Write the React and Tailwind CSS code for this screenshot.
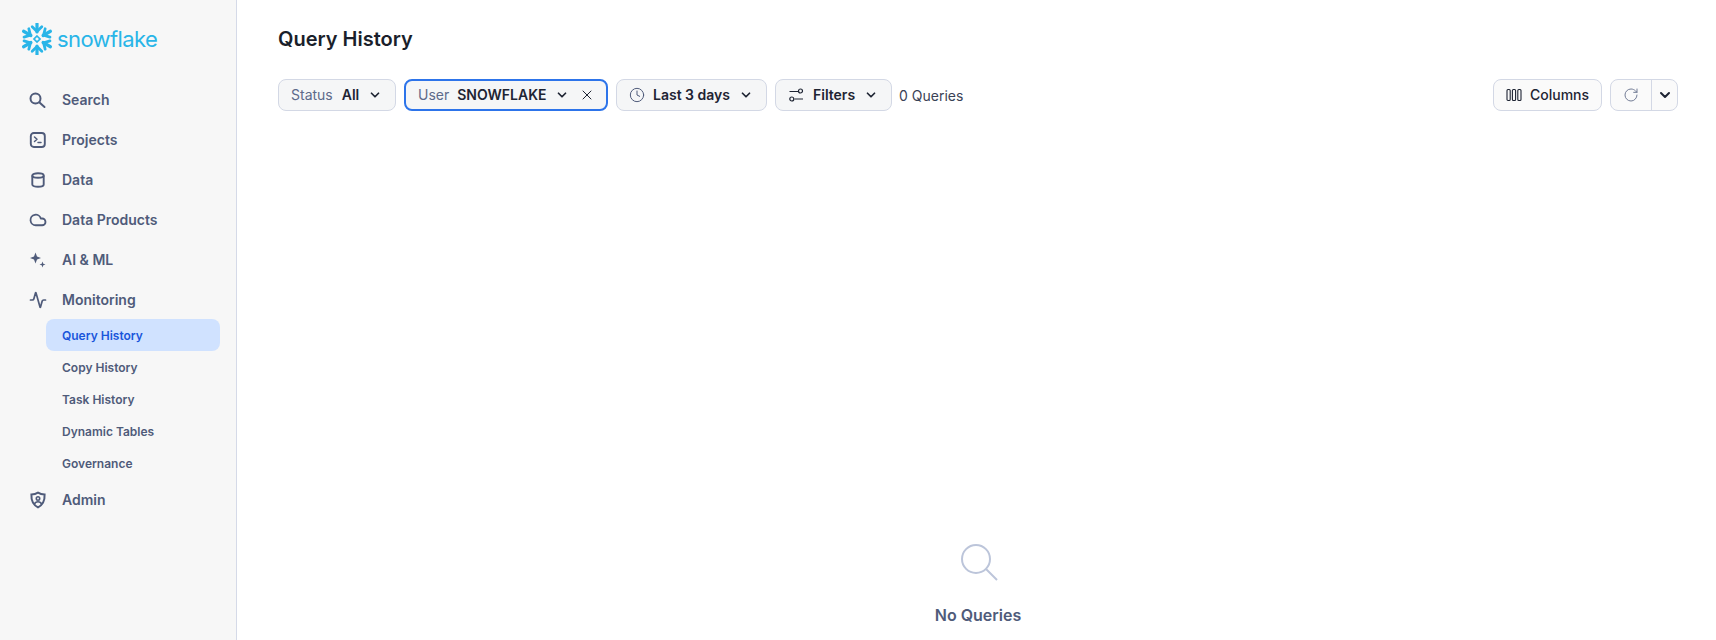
import { Cloud, Activity, ChevronDown, X, Clock, RotateCw } from "lucide-react";

const font = { fontFamily: "Inter, sans-serif" };

function SearchIcon() {
  return (
    <svg width="18" height="18" viewBox="0 0 18 18" fill="none" stroke="currentColor" strokeWidth="2" strokeLinecap="round">
      <circle cx="6.500" cy="7.500" r="5" />
      <path d="M10.500 11.500 15.500 16" />
    </svg>
  );
}

function ProjectsIcon() {
  return (
    <svg width="18" height="18" viewBox="0 0 18 18" fill="none" stroke="currentColor" strokeWidth="1.900" strokeLinecap="round" strokeLinejoin="round">
      <rect x="1.800" y="2" width="14" height="14" rx="3" />
      <path d="M5.500 6 8 8.300 5.500 10.500" strokeWidth="1.500" />
      <path d="M9 11.500h3" strokeWidth="1.500" />
    </svg>
  );
}

function DataIcon() {
  return (
    <svg width="18" height="18" viewBox="0 0 18 18" fill="none" stroke="currentColor" strokeWidth="1.900">
      <path d="M3.300 4.500c0-1.300 2.500-2.300 5.700-2.300s5.700 1 5.700 2.300v9c0 1.300-2.500 2.300-5.700 2.300s-5.700-1-5.700-2.300z" />
      <path d="M3.300 4.500c0 1.300 2.500 2.300 5.700 2.300s5.700-1 5.700-2.300" />
    </svg>
  );
}

function Sparkles() {
  return (
    <svg width="18" height="18" viewBox="0 0 18 18" fill="currentColor">
      <path d="M6.500 1.500 8 5.500l4 1.500-4 1.500-1.500 4-1.500-4-4-1.500 4-1.500z" />
      <path d="M13.500 10.500l.8 2.200 2.200.8-2.200.8-.8 2.200-.8-2.200-2.200-.8 2.200-.8z" />
    </svg>
  );
}

function ShieldUser() {
  return (
    <svg width="18" height="18" viewBox="0 0 18 18" fill="none" stroke="currentColor" strokeWidth="2">
      <path d="M9 1.600c2 1.200 4 1.700 6.600 1.800.3 5.800-1.800 10.500-6.600 13-4.800-2.500-6.900-7.200-6.600-13C5 3.300 7 2.800 9 1.600z" />
      <circle cx="9" cy="7.500" r="1.700" strokeWidth="1.600" />
      <path d="M5.500 13c.6-1.700 2-2.300 3.500-2.300s2.900.6 3.500 2.300" strokeWidth="1.600" />
    </svg>
  );
}

function Logo() {
  const arms = [0, 60, 120, 180, 240, 300];
  return (
    <svg width="32" height="32" viewBox="-16 -16 32 32" fill="none" stroke="#29b5e8">
      {arms.map((a) => (
        <g key={a} transform={`rotate(${a})`}>
          <path d="M0 -7V-15.500" strokeWidth="3.200" strokeLinecap="round" />
          <path d="M-4.800 -12.200 0 -7.600 4.800 -12.200" strokeWidth="2.800" strokeLinecap="round" strokeLinejoin="round" />
        </g>
      ))}
      <path d="M0 -3 3 0 0 3-3 0z" strokeWidth="1.700" />
    </svg>
  );
}

function FiltersIcon() {
  return (
    <svg width="16" height="16" viewBox="0 0 16 16" fill="none" stroke="#1e2433" strokeWidth="1.200">
      <path d="M1.500 4.500H10M6.500 12H15" />
      <circle cx="12.500" cy="4" r="2" />
      <circle cx="3.800" cy="12" r="2" />
    </svg>
  );
}

function ColumnsIcon() {
  return (
    <svg width="16" height="16" viewBox="0 0 16 16" fill="none" stroke="#1e2433" strokeWidth="1.100">
      <rect x="1" y="2.500" width="3.200" height="11" rx="1" />
      <rect x="6.400" y="2.500" width="3.200" height="11" rx="1" />
      <rect x="11.800" y="2.500" width="3.200" height="11" rx="1" />
    </svg>
  );
}

const iconSm = "w-[18px] h-[18px]";

const nav = [
  { label: "Search", icon: <SearchIcon /> },
  { label: "Projects", icon: <ProjectsIcon /> },
  { label: "Data", icon: <DataIcon /> },
  { label: "Data Products", icon: <Cloud className={iconSm} strokeWidth={2.400} /> },
  { label: "AI & ML", icon: <Sparkles /> },
  { label: "Monitoring", icon: <Activity className={iconSm} strokeWidth={2.300} /> },
];

const sub = ["Query History", "Copy History", "Task History", "Dynamic Tables", "Governance"];

const Chevron = () => <ChevronDown className="w-[14px] h-[14px] text-[#1e2433]" strokeWidth={3} />;

const pill = "h-8 flex items-center rounded-lg bg-[#f5f6f7] text-sm text-[#1e2433]";

export default function App() {
  return (
    <div className="flex h-screen overflow-hidden bg-white" style={font}>
      <aside className="w-[237px] shrink-0 bg-[#f7f7f7] border-r border-[#d5dae8] pt-[23px]">
        <div className="flex items-center pl-[21px] h-8 gap-[4px]">
          <Logo />
          <span className="text-[22px] leading-8 font-normal tracking-[-0.6px] text-[#29b5e8]">snowflake</span>
        </div>
        <nav className="mt-[25px] text-[#4f5b7a]">
          {nav.map((n) => (
            <div key={n.label} className="h-10 flex items-center pl-[29px] gap-[15px] text-sm font-semibold">
              <span className="w-[18px] flex justify-center">{n.icon}</span>
              {n.label}
            </div>
          ))}
          <div className="-mt-px mb-px">
            {sub.map((s, i) => (
              <div key={s} className={`h-8 ml-[46px] mr-[16px] pl-4 pt-[2px] flex items-center rounded-lg text-xs font-semibold ${i === 0 ? "bg-[#d0e2ff] text-[#1a56db]" : ""}`}>
                {s}
              </div>
            ))}
          </div>
          <div className="h-10 flex items-center pl-[29px] gap-[15px] text-sm font-semibold">
            <span className="w-[18px] flex justify-center"><ShieldUser /></span>
            Admin
          </div>
        </nav>
      </aside>

      <main className="flex-1 flex flex-col min-w-0 pl-[41px] pr-[38px]">
        <h1 className="mt-[25px] text-xl leading-[28px] font-semibold text-[#1a1f2b]">Query History</h1>
        <div className="mt-[26px] flex items-center">
          <div className={`${pill} border border-[#d3d8e5] w-[118px] pl-3`}>
            <span className="text-[#5d6a8a]">Status</span>
            <span className="ml-[9px] font-semibold">All</span>
            <span className="ml-[9px]"><Chevron /></span>
          </div>
          <div className={`${pill} border-2 border-[#2d74ea] w-[204px] ml-2 pl-3`}>
            <span className="text-[#5d6a8a]">User</span>
            <span className="ml-2 font-semibold">SNOWFLAKE</span>
            <span className="ml-[9px]"><Chevron /></span>
            <X className="w-4 h-4 ml-[10px] text-[#1e2433]" strokeWidth={1.500} />
          </div>
          <div className={`${pill} border border-[#d3d8e5] w-[151px] ml-2 pl-3`}>
            <Clock className="w-4 h-4 text-[#4f5b7a]" strokeWidth={1.500} />
            <span className="ml-2 font-semibold">Last 3 days</span>
            <span className="ml-[9px]"><Chevron /></span>
          </div>
          <div className={`${pill} border border-[#d3d8e5] w-[117px] ml-2 pl-3`}>
            <FiltersIcon />
            <span className="ml-[9px] font-semibold">Filters</span>
            <span className="ml-[9px]"><Chevron /></span>
          </div>
          <span className="ml-[7px] mt-[2px] text-sm text-[#3a4256]">0 Queries</span>
          <div className="ml-auto flex items-center">
            <div className="h-8 w-[109px] flex items-center pl-3 rounded-lg bg-[#fafafa] border border-[#d3d8e5] text-sm font-medium text-[#1e2433]">
              <ColumnsIcon />
              <span className="ml-2">Columns</span>
            </div>
            <div className="h-8 ml-2 flex rounded-lg bg-[#fafafa] border border-[#d3d8e5]">
              <div className="w-[41px] flex items-center justify-center border-r border-[#d3d8e5]">
                <RotateCw className="w-4 h-4 text-[#737d96]" strokeWidth={1.500} />
              </div>
              <div className="w-[25px] flex items-center justify-center">
                <ChevronDown className="w-4 h-4 text-[#1e2433]" strokeWidth={3} />
              </div>
            </div>
          </div>
        </div>
        <div className="mt-[432px] flex flex-col items-center">
          <svg className="ml-[4px]" width="40" height="40" viewBox="0 0 40 40" fill="none" stroke="#bcc5da" strokeWidth="2">
            <circle cx="16" cy="16" r="14" />
            <path d="M26 26l11 11" />
          </svg>
          <div className="mt-[20px] text-base font-semibold text-[#4f5b7a]">No Queries</div>
        </div>
      </main>
    </div>
  );
}
